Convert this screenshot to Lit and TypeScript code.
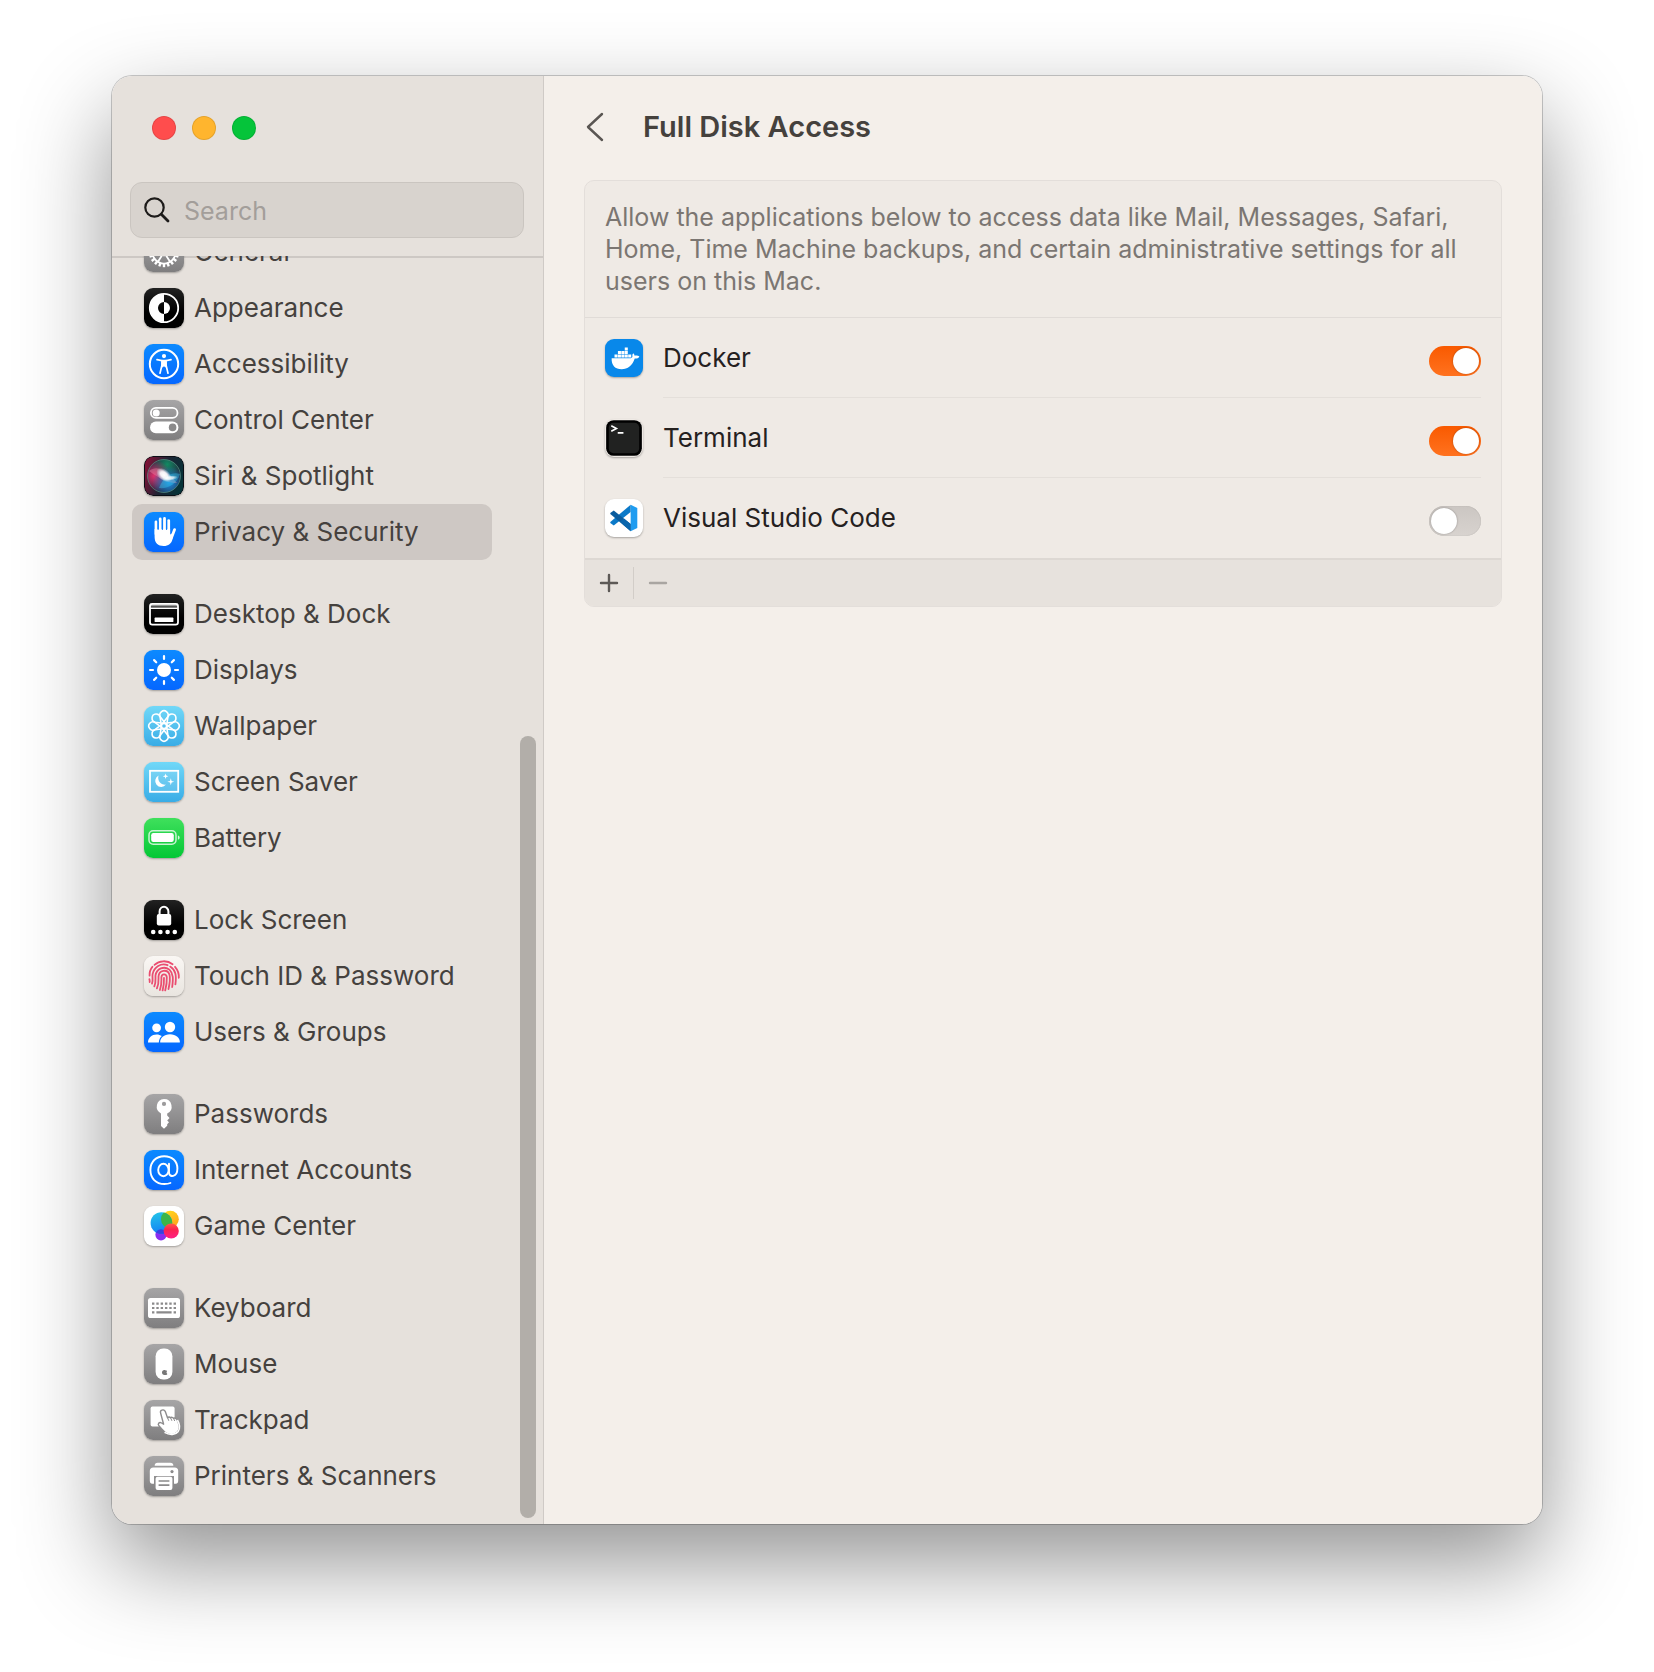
import { LitElement, html, css, svg, nothing, type SVGTemplateResult } from "lit";
import { customElement, property } from "lit/decorators.js";
import { classMap } from "lit/directives/class-map.js";

const petals = [0, 45, 90, 135, 180, 225, 270, 315];
const teeth = Array.from({ length: 20 }, (_, i) => i * 18);
const W = "#fff";

/** Pictograms, drawn on a 40 x 40 grid above a coloured tile. */
const glyphs: Record<string, SVGTemplateResult> = {
  general: svg`
    <g fill="none" stroke=${W} stroke-width="1.8">
      <circle cx="20" cy="20" r="11.6"/><circle cx="20" cy="20" r="3.4"/>
      <path d="M21.8 23 26.2 30M18.2 17 13.8 10M23.4 20H31.6M18.2 23 13.8 30"/>
    </g>
    ${teeth.map((a) => svg`<rect x="18.8" y="4.8" width="2.4" height="4" fill=${W} transform="rotate(${a} 20 20)"/>`)}`,
  appearance: svg`
    <circle cx="20" cy="20" r="14.2" fill="none" stroke=${W} stroke-width="1.8"/>
    <path d="M20 6a14 14 0 0 0 0 28v-8a6 6 0 0 1 0-12z" fill=${W}/>
    <path d="M20 14a6 6 0 0 1 0 12z" fill=${W}/>`,
  accessibility: svg`
    <circle cx="20" cy="20" r="14.2" fill="none" stroke=${W} stroke-width="2"/>
    <circle cx="20" cy="12.1" r="2.1" fill=${W}/>
    <path d="M13 15.6 18 16.6V21L16 29.2M27 15.6 22 16.6V21L24 29.2" fill="none" stroke=${W} stroke-width="1.7" stroke-linecap="round"/>
    <path d="M17.4 15.8h5.2l.3 6-1.2 1.8L20.3 22.5h-.6L18.3 23.6 17.1 21.8z" fill=${W}/>`,
  control: svg`
    <rect x="6.9" y="7.9" width="26.6" height="10" rx="5" fill="none" stroke=${W} stroke-width="1.8"/>
    <circle cx="12.2" cy="12.9" r="3.5" fill=${W}/>
    <rect x="6" y="21.6" width="28.4" height="11.6" rx="5.8" fill=${W}/>
    <circle cx="28.6" cy="27.4" r="3.8" fill="#8b8a8b"/>`,
  siri: svg`
    <defs>
      <linearGradient id="siri-bg" x1="0" y1=".3" x2="1" y2=".6"><stop offset="0" stop-color="#7d1236"/><stop offset=".5" stop-color="#1d2434"/><stop offset="1" stop-color="#063338"/></linearGradient>
      <radialGradient id="siri-r" cx=".2" cy=".5" r=".5"><stop offset="0" stop-color="#e0306c"/><stop offset="1" stop-color="#d8336e" stop-opacity="0"/></radialGradient>
      <radialGradient id="siri-g" cx=".6" cy=".15" r=".5"><stop offset="0" stop-color="#128a62"/><stop offset="1" stop-color="#14805f" stop-opacity="0"/></radialGradient>
      <radialGradient id="siri-b" cx=".65" cy=".7" r=".5"><stop offset="0" stop-color="#1c8fe0"/><stop offset="1" stop-color="#1c8fe0" stop-opacity="0"/></radialGradient>
      <radialGradient id="siri-w"><stop offset="0" stop-color="#fff"/><stop offset=".45" stop-color="#fff" stop-opacity=".9"/><stop offset="1" stop-color="#dff" stop-opacity="0"/></radialGradient>
    </defs>
    <rect width="40" height="40" rx="9" fill="#0c0f16"/>
    <rect x="1" y="1" width="38" height="38" rx="8" fill="url(#siri-bg)"/>
    <circle cx="20" cy="20" r="16.5" fill="#23233c"/>
    <circle cx="20" cy="20" r="16.5" fill="url(#siri-g)"/>
    <circle cx="20" cy="20" r="16.5" fill="url(#siri-r)"/>
    <circle cx="20" cy="20" r="16.5" fill="url(#siri-b)"/>
    <circle cx="20" cy="20" r="16.5" fill="none" stroke="#5fa08c" stroke-opacity=".6"/>
    <path d="M5 15c8-6 16-2 28 12-8 0-14-2-28-12z" fill="#ff9ab8" opacity=".35"/>
    <path d="M36 18c-7-2-15 0-21 14 9 1 18-4 21-14z" fill="#38c8f0" opacity=".4"/>
    <ellipse cx="20" cy="19" rx="9" ry="5.6" fill="url(#siri-w)" transform="rotate(40 20 19)"/>
    <ellipse cx="26" cy="22" rx="8" ry="2.6" fill="url(#siri-w)" transform="rotate(-6 26 22)" opacity=".8"/>`,
  privacy: svg`
    <g fill="none" stroke=${W} stroke-width="2.8" stroke-linecap="round">
      <path d="M12 9.8V22M16.2 7V20M20.5 6.4V20M24.7 8.6V22M30.6 17.6 27.4 26"/>
    </g>
    <path d="M10.6 17H26.1V22.6L29 21 28.4 27.5C27.4 31.6 24.5 34 19.6 34 14 34 10.6 31 10.6 25z" fill=${W}/>
    <path d="M14.1 9V18M18.35 8V18M22.6 9V18" stroke="#0b7cff" stroke-width="1" fill="none"/>`,
  desktop: svg`
    <path d="M6 11H34" stroke="#999" stroke-width="3"/>
    <rect x="6" y="9.8" width="28" height="20.8" rx="2.4" fill="none" stroke=${W} stroke-width="1.8"/>
    <path d="M6 14.2H34" stroke=${W} stroke-width="1.4"/>
    <rect x="10.6" y="23.6" width="18.8" height="4.4" rx=".6" fill=${W}/>`,
  displays: svg`
    <circle cx="20" cy="20" r="7" fill=${W}/>
    ${petals.map((a) => svg`<path d="M20 6v3" stroke=${W} stroke-width="2.2" stroke-linecap="round" transform="rotate(${a} 20 20)"/>`)}`,
  wallpaper: svg`
    ${petals.map((a) => svg`<path d="M22.2 18.6 16.6 11.2A4.1 4.1 0 1 1 23.4 11.2L17.8 18.6" fill="none" stroke=${W} stroke-width="1.6" transform="rotate(${a} 20 20)"/>`)}
    <circle cx="20" cy="20" r="2.6" fill="#55bfee" stroke=${W} stroke-width="1.6"/>`,
  saver: svg`
    <rect x="6" y="8.8" width="28.2" height="21" fill="#fff" fill-opacity=".12" stroke=${W} stroke-width="1.8"/>
    <path d="M14.6 13.6a6 6 0 1 0 7.4 9 6.8 6.8 0 0 1-7.4-9z" fill=${W}/>
    <path d="M21.6 11.4l.7 2.1 2.1.7-2.1.7-.7 2.1-.7-2.1-2.1-.7 2.1-.7zM26.8 16.2l.8 2.7 2.7.8-2.7.8-.8 2.7-.8-2.7-2.7-.8 2.7-.8z" fill=${W}/>`,
  battery: svg`
    <rect x="5" y="12.8" width="27" height="13.4" rx="4.2" fill="none" stroke=${W} stroke-opacity=".75" stroke-width="1.5"/>
    <rect x="7.2" y="15" width="22.6" height="9" rx="2.2" fill=${W}/>
    <path d="M33.9 17.4c2.3.5 2.3 3.7 0 4.2z" fill=${W} fill-opacity=".8"/>`,
  lock: svg`
    <path d="M15.6 15v-3.4a4.4 4.8 0 0 1 8.8 0V15" fill="none" stroke=${W} stroke-width="2"/>
    <rect x="12.8" y="14" width="14.4" height="11.6" rx="2" fill=${W}/>
    <circle cx="9.2" cy="32" r="2.3" fill=${W}/><circle cx="16.4" cy="32" r="2.3" fill=${W}/>
    <circle cx="23.6" cy="32" r="2.3" fill=${W}/><circle cx="30.8" cy="32" r="2.3" fill=${W}/>`,
  touch: svg`
    <g fill="none" stroke="#ea4d70" stroke-width="1.8" stroke-linecap="round">
      <path d="M10.5 8.8C15 4.6 23 3.8 28.6 8.2M31 10.8c3 3.4 4.2 6 3.8 11M5.6 19.6c-.2-3 .8-6.4 2.8-8.8M5.4 23.2c.3 1 .4 1.8.3 2.8"/>
      <path d="M8 27.6C9.4 24 8 22 8.6 18.2 10 11 17 6.6 23.6 9.2M26.2 10.6c5.6 3.6 6.4 9 5.2 17.8"/>
      <path d="M10.3 30.4c1.900-4.600 1-7.600 1.200-11C12.600 12.600 20 9.600 25.400 13.600c4.200 4 3.800 9.400 2.800 17.400"/>
      <path d="M12.900 32.400c2.200-5 1.600-8.800 1.600-11.800.4-6.600 8.800-8 11-2 .8 3.600.2 9-1 14.400"/>
      <path d="M15.900 34c2-5.400 1.500-8.600 1.500-12.800.4-4 5-3.600 5.400 0 .2 4.200-.4 8.600-1.600 13.200"/>
      <path d="M20 21.800c.2 4.600-.2 8-1.400 12.600"/>
    </g>`,
  users: svg`
    <circle cx="12.6" cy="15.8" r="4.4" fill=${W}/><circle cx="26" cy="15" r="5.2" fill=${W}/>
    <path d="M4 30.4c0-4.600 3.800-8 8.600-8 2 0 3.800.6 5.200 1.600-1.800 1.600-2.800 3.800-3 6.400z" fill=${W}/>
    <path d="M16.200 30.600c-.6-4.600 4-8.400 9.800-8.400s10.400 3.800 9.800 8.400z" fill=${W}/>`,
  key: svg`
    <path fill-rule="evenodd" d="M20 5a7.600 7.600 0 0 1 3.200 14.500v2.100l2.300 2.400-2.300 2.400 1.800 1.900-1.800 2v1.500L20 34.800 17 32V19.400A7.600 7.600 0 0 1 20 5zm0 2.800a2.100 2.100 0 1 0 0 4.200 2.100 2.100 0 0 0 0-4.200z" fill=${W}/>`,
  at: svg`
    <g fill="none" stroke=${W} stroke-width="1.9" stroke-linecap="round">
      <ellipse cx="19.4" cy="20" rx="5.2" ry="6.2"/>
      <path d="M25 13.800V22.600c0 5 8.400 5.200 8.400-4C33.400 11 28 6.200 20.200 6.200 12 6.200 6.400 11.800 6.400 20S11.800 34 20.400 34c2.400 0 4.400-.3 6-1"/>
    </g>`,
  game: svg`
    <defs>
      <linearGradient id="gc-b" x1="0" y1="0" x2=".2" y2="1"><stop offset="0" stop-color="#25c7e8"/><stop offset="1" stop-color="#1484f4"/></linearGradient>
      <linearGradient id="gc-y" x1="0" y1="0" x2=".6" y2="1"><stop offset="0" stop-color="#ffe11c"/><stop offset="1" stop-color="#ffa51e"/></linearGradient>
      <linearGradient id="gc-r" x1="0" y1="0" x2="0" y2="1"><stop offset="0" stop-color="#ff5a4a"/><stop offset=".4" stop-color="#fb2450"/><stop offset="1" stop-color="#ff1f86"/></linearGradient>
      <clipPath id="gc-c"><circle cx="17.4" cy="17" r="10.8"/></clipPath>
    </defs>
    <circle cx="17" cy="28.8" r="5.6" fill="#8a2df0"/>
    <circle cx="26.4" cy="13.2" r="8.4" fill="url(#gc-y)"/>
    <circle cx="17.4" cy="17" r="10.8" fill="url(#gc-b)"/>
    <g clip-path="url(#gc-c)"><circle cx="26.4" cy="13.2" r="9.4" fill="#3cb54a"/><circle cx="17" cy="28.8" r="5.6" fill="#3a3fe0"/></g>
    <circle cx="27.2" cy="25" r="7.6" fill="url(#gc-r)"/>`,
  keyboard: svg`
    <rect x="4" y="10" width="32" height="20" rx="2.600" fill=${W}/>
    <g stroke="#8b8a8b" fill="none">
      <path d="M8 15.6H32M8 20H32" stroke-width="2.2" stroke-dasharray="2.4 1.92"/>
      <path d="M8 24.4h2.4M12.4 24.4h15.2M29.6 24.4H32" stroke-width="2.2"/>
    </g>`,
  mouse: svg`
    <rect x="11.6" y="4.6" width="16.8" height="31" rx="7.6" fill=${W}/>
    <path d="M21.4 26.2c.8.4 1.400.2 1.800.8-1 1-.8 2.200.2 2.900-.6 1.200-1.500 1.200-2.600 1-1.600.3-2.800-.9-2.800-2.500 0-1.800 1.500-2.900 3.400-2.200z" fill="#777"/>`,
  trackpad: svg`
    <rect x="6.6" y="6.6" width="24" height="20" rx="1.8" fill=${W}/>
    <path d="M17.800 10.200c1.600-.8 2.900-.1 3.500 1.400l2.200 6.200c.8-1 2.400-1 3 0 1-.8 2.400-.6 3 .6 1.400-.8 2.900 0 3.600 1.400 1.800 3.400 3.200 7 1.400 10.600-2.400 4.400-7.400 4.700-11.200 3.200-3-1.200-5-4.400-8.200-7.600-2-2 .1-4.300 2.500-3l2 1.200L16.600 13c-.4-1.200 0-2.300 1.200-2.800z" fill=${W} stroke="#8d8c8d" stroke-width="1.400" stroke-linejoin="round"/>
    <path d="M23.6 17.8l1.2 3M26.700 18l1.2 2.800M29.700 18.600l1 2.400" stroke="#8d8c8d" stroke-width="1"/>
    <path d="M20.5 32.4c5.5 3 11 2.600 13.700-1 2.400-3.400 1.400-7.400-.8-11.400" fill="none" stroke=${W} stroke-width="1.6"/>`,
  printer: svg`
    <path d="M10.6 9.800c0-2 1.200-3 3-3h12.800c1.800 0 3 1 3 3z" fill=${W}/>
    <path d="M9.400 11.400h21.200a3.600 3.600 0 0 1 3.600 3.600v9.800c0 2-1 3-2.400 3H30V20H10v7.800H8.200c-1.400 0-2.400-1-2.400-3V15a3.600 3.600 0 0 1 3.600-3.600z" fill=${W}/>
    <circle cx="28" cy="15.6" r="1.6" fill="#8b8a8b"/>
    <rect x="11.6" y="20.8" width="16.8" height="13.2" rx="2" fill=${W}/>
    <path d="M14.6 25h10.800M14.6 29.200h10.800" stroke="#8b8a8b" stroke-width="1.7"/>`,
  docker: svg`
    <path d="M7 20.200H27c1.500-.3 2.200-1.300 1.800-2.800-.1-1 .3-1.800 1-2.500.9.700 1.300 1.600 1.400 2.700 1.300-.3 3.900-.2 5 1-.8 1.500-2.800 2-4.900 1.900-2.500 7.400-7.300 11.300-13.800 11.300-6.700 0-10.900-4.200-10.500-11.600z" fill=${W}/>
    <path d="M10 16.200h3.200v3.300h-3.200zM13.600 16.200h3.200v3.300h-3.200zM17.200 16.200h3.200v3.300h-3.200zM20.800 16.200h3.200v3.300h-3.200zM24.400 16.200h3.200v3.300h-3.200zM13.600 12.600h3.200v3.200h-3.200zM17.200 12.600h3.200v3.200h-3.200zM20.800 12.600h3.200v3.200h-3.200zM20.800 9h3.200v3.200h-3.200z" fill=${W}/>`,
  terminal: svg`
    <rect x="1.2" y="1.2" width="37.600" height="37.600" rx="8" fill="#000"/>
    <rect x="4" y="4" width="32" height="32" rx="5" fill="#212221"/>
    <path d="M6.6 7.2 12 10 6.600 12.800M13.400 14.600h6" fill="none" stroke=${W} stroke-width="1.7"/>`,
  vscode: svg`
    <path d="M27 6 34 9.400V30.600L27 34z" fill="#1f9cf0"/>
    <path d="M27 6V13.800L9.200 28 5.600 25.200V24.200z" fill="#0b79c8"/>
    <path d="M27 34V26.200L9.200 12 5.600 14.800V15.800z" fill="#0a5c9e"/>
    <path d="M27 34V26.200L20 20.600 15.800 24z" fill="#0a66ad"/>`,
};

@customElement("tile-icon")
class TileIcon extends LitElement {
  @property() name = "";
  @property() tone = "";

  static styles = css`
    :host { display: block; flex: none; }
    .tile { display: block; width: 40px; height: 40px; border-radius: 9px; box-shadow: 0 1px 2px rgba(0, 0, 0, 0.3); }
    .small { width: 38px; height: 38px; }
    .gray { background: linear-gradient(#a6a5a6, #7f7e7f); }
    .black { background: linear-gradient(#222, #000 60%); }
    .blue { background: linear-gradient(#0c8aff, #0567ff); }
    .sky { background: linear-gradient(#71d8f8, #39ace6); }
    .green { background: linear-gradient(#3fe05c, #03c735); }
    .white { background: #fff; }
    .pearl { background: linear-gradient(#faf7f4, #e9e5e0); }
    .docker { background: #0888ea; }
  `;

  render() {
    const small = ["docker", "terminal", "vscode"].includes(this.name);
    return html`<svg class=${classMap({ tile: true, small, [this.tone || "plain"]: true })} viewBox="0 0 40 40" aria-hidden="true">${glyphs[this.name] ?? nothing}</svg>`;
  }
}

interface NavItem { label: string; icon: string; tone: string; current?: boolean }

const groups: NavItem[][] = [
  [
    { label: "General", icon: "general", tone: "gray" },
    { label: "Appearance", icon: "appearance", tone: "black" },
    { label: "Accessibility", icon: "accessibility", tone: "blue" },
    { label: "Control Center", icon: "control", tone: "gray" },
    { label: "Siri & Spotlight", icon: "siri", tone: "" },
    { label: "Privacy & Security", icon: "privacy", tone: "blue", current: true },
  ],
  [
    { label: "Desktop & Dock", icon: "desktop", tone: "black" },
    { label: "Displays", icon: "displays", tone: "blue" },
    { label: "Wallpaper", icon: "wallpaper", tone: "sky" },
    { label: "Screen Saver", icon: "saver", tone: "sky" },
    { label: "Battery", icon: "battery", tone: "green" },
  ],
  [
    { label: "Lock Screen", icon: "lock", tone: "black" },
    { label: "Touch ID & Password", icon: "touch", tone: "pearl" },
    { label: "Users & Groups", icon: "users", tone: "blue" },
  ],
  [
    { label: "Passwords", icon: "key", tone: "gray" },
    { label: "Internet Accounts", icon: "at", tone: "blue" },
    { label: "Game Center", icon: "game", tone: "white" },
  ],
  [
    { label: "Keyboard", icon: "keyboard", tone: "gray" },
    { label: "Mouse", icon: "mouse", tone: "gray" },
    { label: "Trackpad", icon: "trackpad", tone: "gray" },
    { label: "Printers & Scanners", icon: "printer", tone: "gray" },
  ],
];

@customElement("settings-sidebar")
class SettingsSidebar extends LitElement {
  static styles = css`
    :host { display: flex; flex-direction: column; min-height: 0; background: #e6e1dc; border-right: 1px solid #cfcac6; }
    .lights { display: flex; gap: 16px; padding: 40px 40px 42px; }
    .light { width: 24px; height: 24px; padding: 0; border: 1px solid rgba(0, 0, 0, 0.1); border-radius: 50%; }
    .close { background: #ff4d4d; }
    .minimise { background: #ffb52e; }
    .zoom { background: #05c43a; }
    .search { display: flex; align-items: center; gap: 13px; height: 56px; margin: 0 19px 18px 18px; padding: 0 12px; box-sizing: border-box; background: #d8d3ce; border: 1px solid #cac5c0; border-radius: 12px; }
    .lens { flex: none; width: 28px; height: 28px; }
    .query { flex: 1; min-width: 0; padding: 2px 0 0; border: 0; outline: 0; background: none; color: #3f3b38; font: inherit; }
    .query::placeholder { color: #a39e9a; opacity: 1; }
    .scroller { display: flex; flex: 1; min-height: 0; background: linear-gradient(#cdc8c4 2px, transparent 2px); }
    .list { display: flex; flex: 1; flex-direction: column; justify-content: flex-end; gap: 26px; min-width: 0; overflow: hidden; padding: 0 28px 20px 20px; font-size: 26px; }
    .group { flex: none; margin: 0; padding: 0; list-style: none; }
    .item { display: flex; align-items: center; gap: 10px; height: 56px; padding: 0 12px; border-radius: 10px; color: #45413e; text-decoration: none; white-space: nowrap; }
    .current { background: #cec8c4; }
    .track { display: flex; flex: none; flex-direction: column; justify-content: flex-end; padding: 0 7px 6px 0; }
    .thumb { width: 16px; height: 62%; border-radius: 8px; background: #b2aea9; }
  `;

  render() {
    return html`
      <div class="lights">
        <button class="light close" aria-label="Close"></button>
        <button class="light minimise" aria-label="Minimise"></button>
        <button class="light zoom" aria-label="Zoom"></button>
      </div>
      <label class="search">
        <svg class="lens" viewBox="0 0 28 28" fill="none" stroke="#1d1b1a" stroke-linecap="round" aria-hidden="true">
          <circle cx="11.5" cy="11.5" r="9.2" stroke-width="2.2"/><path d="M18.3 18.3 25 25" stroke-width="2.8"/>
        </svg>
        <input class="query" type="search" placeholder="Search" aria-label="Search" />
      </label>
      <div class="scroller">
        <nav class="list">
          ${groups.map((items) => html`<ul class="group">
            ${items.map((item) => html`<li>
              <a class=${classMap({ item: true, current: !!item.current })} href="#" aria-current=${item.current ? "page" : nothing}>
                <tile-icon .name=${item.icon} .tone=${item.tone}></tile-icon><span>${item.label}</span>
              </a>
            </li>`)}
          </ul>`)}
        </nav>
        <div class="track"><div class="thumb"></div></div>
      </div>`;
  }
}

const apps = [
  { label: "Docker", icon: "docker", tone: "docker", on: true },
  { label: "Terminal", icon: "terminal", tone: "", on: true },
  { label: "Visual Studio Code", icon: "vscode", tone: "white", on: false },
];

@customElement("access-pane")
class AccessPane extends LitElement {
  static styles = css`
    :host { display: block; min-width: 0; padding: 31px 40px; background: #f4efea; box-sizing: border-box; }
    .head { display: flex; align-items: center; gap: 32px; height: 40px; margin-bottom: 33px; }
    .back { display: flex; padding: 0; border: 0; background: none; }
    .chevron { width: 27px; height: 30px; }
    .title { margin: 0; color: #45413d; font-size: 29px; font-weight: 600; line-height: 40px; }
    .card { border: 1px solid #e3deda; border-radius: 10px; background: #efeae5; overflow: hidden; }
    .intro { margin: 0; padding: 20px; border-bottom: 1px solid #e0dbd7; color: #7b7672; }
    .apps { margin: 0; padding: 0 20px; list-style: none; font-size: 26px; }
    .app { display: grid; grid-template-columns: 38px 1fr 52px; align-items: center; column-gap: 20px; height: 80px; color: #25211f; }
    .app:not(:last-child) .name, .app:not(:last-child) .cell { border-bottom: 1px solid #e4dfda; }
    .name { display: flex; align-items: center; height: 100%; box-sizing: border-box; margin-right: -20px; }
    .cell { display: flex; align-items: center; height: 100%; box-sizing: border-box; padding-top: 6px; }
    .switch { appearance: none; display: block; width: 52px; height: 30px; margin: 0; padding: 2px; box-sizing: border-box; border-radius: 15px; background: linear-gradient(#cbc6c2, #d8d3cf); box-shadow: inset 0 0 1px rgba(0, 0, 0, 0.25); }
    .switch::before { content: ""; display: block; width: 26px; height: 26px; border-radius: 50%; background: #fff; box-shadow: 0 0 2px rgba(0, 0, 0, 0.35); }
    .switch:checked { background: linear-gradient(#f95a00, #ff721f); box-shadow: none; }
    .switch:checked::before { margin-left: auto; }
    .foot { display: flex; align-items: center; height: 46px; border-top: 2px solid #ddd8d3; background: #e7e2dd; }
    .tool { display: grid; place-items: center; width: 48px; height: 32px; padding: 0; border: 0; background: none; }
    .tool + .tool { border-left: 1px solid #d2cdc8; }
    .sign { width: 20px; height: 20px; }
  `;

  render() {
    return html`
      <header class="head">
        <button class="back" aria-label="Back">
          <svg class="chevron" viewBox="0 0 27 30" fill="none" stroke="#5a5653" stroke-width="2.4" stroke-linecap="round" stroke-linejoin="round"><path d="M18 2 4 15 18 28"/></svg>
        </button>
        <h1 class="title">Full Disk Access</h1>
      </header>
      <section class="card">
        <p class="intro">Allow the applications below to access data like Mail, Messages, Safari, Home, Time Machine backups, and certain administrative settings for all users on this Mac.</p>
        <ul class="apps">
          ${apps.map((app) => html`<li class="app">
            <tile-icon .name=${app.icon} .tone=${app.tone}></tile-icon>
            <label class="name" for=${app.icon}>${app.label}</label>
            <span class="cell"><input class="switch" id=${app.icon} type="checkbox" role="switch" .checked=${app.on} /></span>
          </li>`)}
        </ul>
        <div class="foot">
          <button class="tool" aria-label="Add"><svg class="sign" viewBox="0 0 20 20" stroke="#5d5956" stroke-width="2.4" stroke-linecap="round"><path d="M2 10H18M10 2V18"/></svg></button>
          <button class="tool" aria-label="Remove" disabled><svg class="sign" viewBox="0 0 20 20" stroke="#a9a5a1" stroke-width="2.4" stroke-linecap="round"><path d="M2 10H18"/></svg></button>
        </div>
      </section>`;
  }
}

@customElement("app-root")
class AppRoot extends LitElement {
  static styles = css`
    :host { display: block; height: 100vh; padding: 76px 112px 148px; box-sizing: border-box; overflow: hidden; background: #fff; font: 25px/32px Inter, "Liberation Sans", sans-serif; }
    .window { display: grid; grid-template-columns: 432px 1fr; grid-template-rows: 100%; height: 100%; border-radius: 20px; overflow: hidden; }
    .frame { height: 100%; border-radius: 20px; box-shadow: 0 0 0 1px rgba(0, 0, 0, 0.2), 0 38px 92px rgba(0, 0, 0, 0.43); }
  `;

  render() {
    return html`<div class="frame"><main class="window"><settings-sidebar></settings-sidebar><access-pane></access-pane></main></div>`;
  }
}
